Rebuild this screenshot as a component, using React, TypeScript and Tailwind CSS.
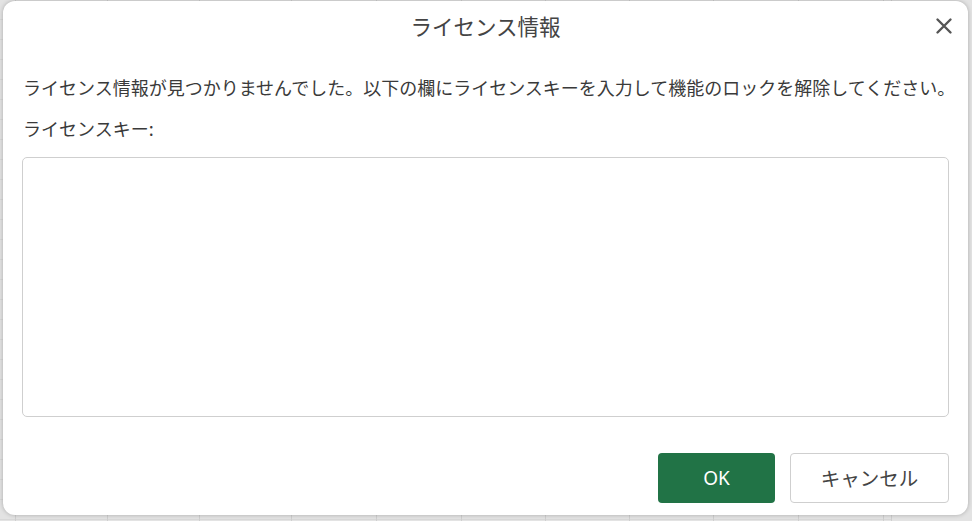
import React from 'react';

const jp = { fontFamily: '"Noto Sans CJK JP", "Noto Sans", sans-serif' };

function SheetBackdrop() {
  const cols = [16, 92, 92, 92, 85, 85, 84, 84, 84, 85, 85, 8];
  return (
    <div className="flex h-full w-full">
      {cols.map((w, i) => (
        <div key={i} className="h-full border-r border-[#cfcfcf] flex flex-col" style={{ width: w }}>
          {Array.from({ length: 26 }).map((_, j) => (
            <div key={j} className="h-[20px] border-b border-[#d8d8d8]" />
          ))}
        </div>
      ))}
    </div>
  );
}

export default function App() {
  return (
    <div className="relative w-[972px] h-[521px] overflow-hidden bg-[#e3e3e3]" style={jp}>
      <SheetBackdrop />

      {/* License dialog */}
      <div className="absolute left-[3px] top-[1px] w-[965px] h-[514px] bg-white rounded-[12px] shadow-[0_0_4px_rgba(0,0,0,0.25)] flex flex-col px-[19px] pb-[12px]">
        <div className="grid grid-cols-[1fr_auto_1fr] items-center h-[50px]">
          <div />
          <div className="text-[21.5px] text-[#444] leading-none">ライセンス情報</div>
          <div className="flex justify-end -mr-[4px]">
            <svg width="18" height="18" viewBox="0 0 18 18" className="text-[#555]">
              <path d="M2.5 2.5 L15.5 15.5 M15.5 2.5 L2.5 15.5" stroke="currentColor" strokeWidth="2.4" strokeLinecap="round" />
            </svg>
          </div>
        </div>

        <p className="mt-[24px] h-[24px] leading-[24px] text-[18px] text-[#3a3a3a] whitespace-nowrap pl-[1px]">
          ライセンス情報が見つかりませんでした。以下の欄にライセンスキーを入力して機能のロックを解除してください。
        </p>
        <label className="mt-[17px] h-[24px] leading-[24px] text-[18px] text-[#3a3a3a] pl-[1px]">ライセンスキー:</label>

        <textarea className="mt-[17px] h-[260px] w-full resize-none rounded-[5px] border border-[#cfcfcf] outline-none" />

        <div className="mt-[36px] flex justify-end gap-[15px]">
          <button className="h-[50px] w-[117px] rounded-[4px] bg-[#217346] text-white text-[19px]" style={{ fontFamily: '"Noto Sans", sans-serif' }}>
            OK
          </button>
          <button className="h-[50px] w-[159px] rounded-[4px] border border-[#cfcfcf] bg-white text-[19.5px] text-[#444]">
            キャンセル
          </button>
        </div>
      </div>
    </div>
  );
}
